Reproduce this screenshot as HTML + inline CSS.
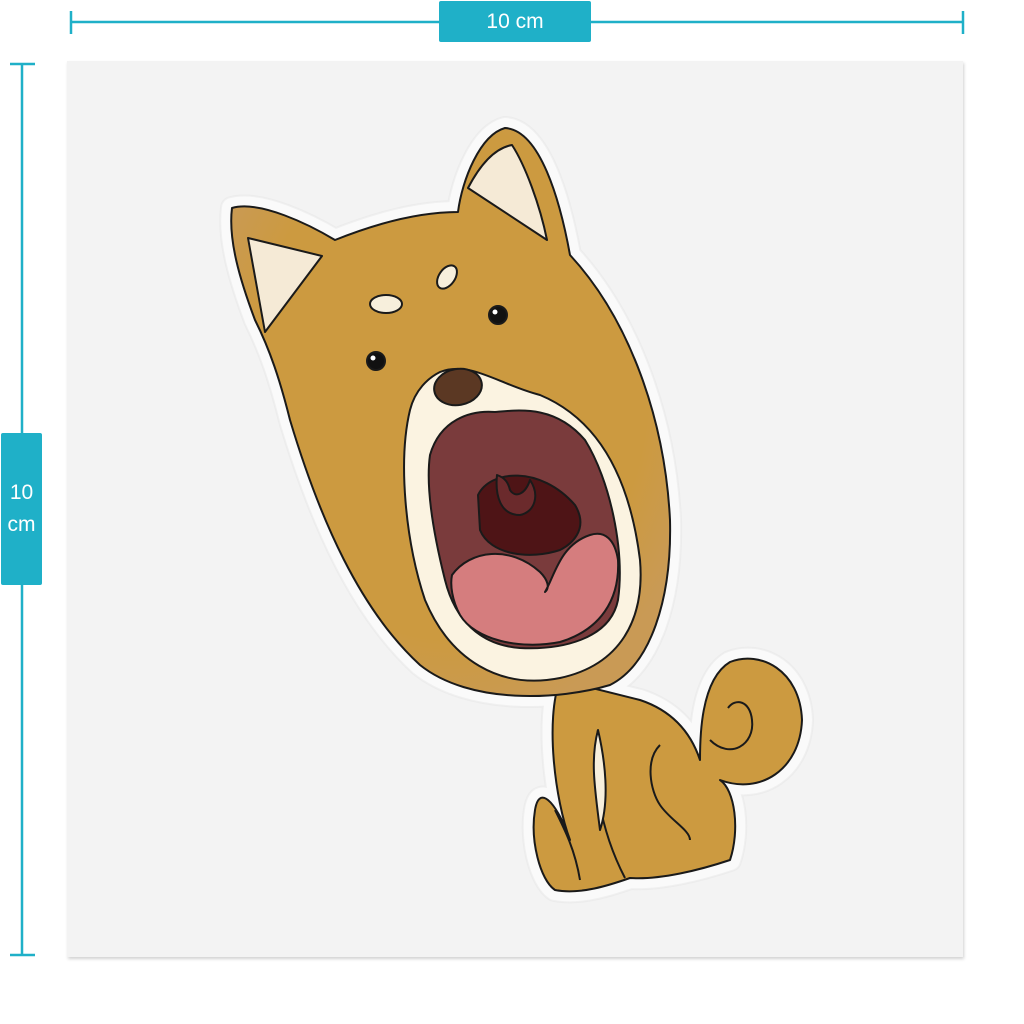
<!DOCTYPE html>
<html><head><meta charset="utf-8"><style>
body{margin:0;width:1024px;height:1024px;background:#fff;position:relative;overflow:hidden;font-family:"Liberation Sans",sans-serif}
.card{position:absolute;left:67px;top:61px;width:896px;height:896px;background:#f3f3f3;box-shadow:1px 2px 3px rgba(0,0,0,.18)}
.lbl{position:absolute;background:#1fb0c8;color:#fff;font-size:21px;text-align:center;border-radius:2px}
</style></head><body>
<svg width="1024" height="1024" style="position:absolute;left:0;top:0">
<g stroke="#1fb0c8" stroke-width="2.5">
<line x1="70" y1="22" x2="964" y2="22"/><line x1="71" y1="11" x2="71" y2="34"/><line x1="963" y1="11" x2="963" y2="34"/>
<line x1="22" y1="63" x2="22" y2="956"/><line x1="10" y1="64" x2="35" y2="64"/><line x1="10" y1="955" x2="35" y2="955"/>
</g></svg>
<div class="lbl" style="left:439px;top:1px;width:152px;height:41px;line-height:41px">10 cm</div>
<div class="lbl" style="left:1px;top:433px;width:41px;height:152px;line-height:32px;padding-top:44px;box-sizing:border-box">10<br>cm</div>
<div class="card"></div>
<svg width="1024" height="1024" style="position:absolute;left:0;top:0">
<defs>
<radialGradient id="fur" cx="50%" cy="45%" r="60%"><stop offset="0.75" stop-color="#cc9a40"/><stop offset="1" stop-color="#c99a55"/></radialGradient>
<g id="sil">
<path d="M232,208 C260,200 310,225 335,240 C380,222 420,212 458,212 C462,180 480,135 505,128 C540,130 560,200 570,255 C630,320 665,420 670,520 C672,600 650,665 610,685 C560,700 470,705 420,665 C360,610 320,520 290,420 C280,380 270,350 255,320 C240,280 228,240 232,208 Z"/>
<path d="M560,680 C545,720 555,800 570,840 C560,810 540,780 535,810 C530,840 540,880 555,890 C580,895 610,885 630,878 C660,880 700,870 730,860 C740,830 735,790 720,780 C760,795 800,770 802,720 C800,670 760,650 730,662 C700,680 700,740 700,760 C690,730 670,710 640,700 Z"/>
</g>
</defs>
<use href="#sil" fill="#fafafa" stroke="#fafafa" stroke-width="22" stroke-linejoin="round"/>
<use href="#sil" fill="none" stroke="#e6e6e6" stroke-width="24" stroke-linejoin="round" opacity="0.5"/>
<use href="#sil" fill="#fafafa" stroke="#fafafa" stroke-width="20" stroke-linejoin="round"/>
<g stroke="#1a1a1a" stroke-width="2" stroke-linejoin="round">
<path d="M560,680 C545,720 555,800 570,840 C560,810 540,780 535,810 C530,840 540,880 555,890 C580,895 610,885 630,878 C660,880 700,870 730,860 C740,830 735,790 720,780 C760,795 800,770 802,720 C800,670 760,650 730,662 C700,680 700,740 700,760 C690,730 670,710 640,700 Z" fill="#cc9a40"/>
<path d="M710,740 C730,760 755,745 752,720 C750,700 735,698 728,708" fill="none"/>
<path d="M598,730 C590,770 600,830 625,878" fill="none"/>
<path d="M598,730 C605,760 610,800 600,830 C595,790 590,760 598,730 Z" fill="#f7efdc"/>
<path d="M580,880 C575,850 565,830 555,810" fill="none"/>
<path d="M660,745 C645,760 650,790 660,805 C670,820 690,830 690,840" fill="none"/>
<path d="M232,208 C260,200 310,225 335,240 C380,222 420,212 458,212 C462,180 480,135 505,128 C540,130 560,200 570,255 C630,320 665,420 670,520 C672,600 650,665 610,685 C560,700 470,705 420,665 C360,610 320,520 290,420 C280,380 270,350 255,320 C240,280 228,240 232,208 Z" fill="url(#fur)"/>
<path d="M248,238 L322,256 L265,332 Z" fill="#f5ead6"/>
<path d="M468,188 C480,165 495,148 512,145 C525,165 540,205 547,240 Z" fill="#f5ead6"/>
<ellipse cx="386" cy="304" rx="16" ry="9" fill="#f7efdc"/>
<ellipse cx="447" cy="277" rx="8" ry="13" transform="rotate(35 447 277)" fill="#f7efdc"/>
<path d="M440,372 C470,360 500,385 540,395 C600,420 630,480 640,560 C645,620 620,665 560,678 C500,690 450,660 425,600 C405,540 398,460 410,410 C415,390 428,378 440,372 Z" fill="#fbf3e1"/>
<path d="M430,455 C440,420 470,410 495,412 C520,410 555,405 585,440 C610,480 625,550 618,600 C610,640 560,650 520,648 C480,645 455,620 445,580 C435,540 425,490 430,455 Z" fill="#7a3b3c"/>
<path d="M478,495 C490,470 540,465 575,505 C590,530 570,545 560,550 C530,560 490,555 480,530 Z" fill="#4e1416"/>
<path d="M497,475 C495,495 500,515 520,515 C535,512 540,495 530,480 C525,495 515,498 510,490 C508,482 505,478 497,475 Z" fill="#6b2a2c"/>
<path d="M452,575 C470,550 510,545 540,572 C548,580 550,588 545,592 C555,575 560,545 590,535 C605,530 615,540 618,560 C620,600 600,630 560,642 C520,650 475,640 460,615 C452,600 450,585 452,575 Z" fill="#d57d7e"/>
<ellipse cx="458" cy="387" rx="24" ry="18" transform="rotate(-10 458 387)" fill="#5b3823"/>
<circle cx="376" cy="361" r="9" fill="#111"/><circle cx="498" cy="315" r="9" fill="#111"/>
</g>
<circle cx="373" cy="358" r="2.5" fill="#fff"/><circle cx="495" cy="312" r="2.5" fill="#fff"/>
</svg>
</body></html>
